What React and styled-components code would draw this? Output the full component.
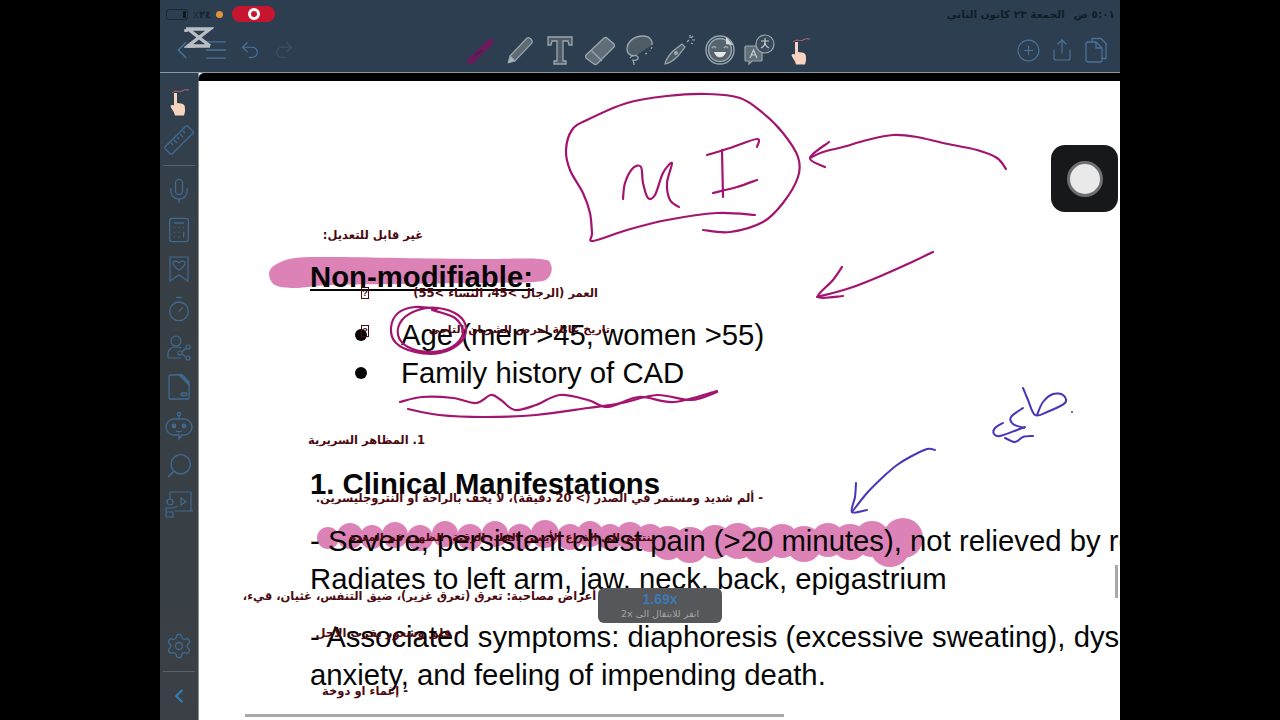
import styled, { createGlobalStyle } from "styled-components"
import { ChevronLeft, Menu, Undo2, Redo2, PlusCircle, Share, Copy, Mic, Calculator, Timer, Search, Settings } from "lucide-react"

const GlobalStyle = createGlobalStyle`
  html, body {
    margin: 0;
    padding: 0;
    background: #000;
    overflow: hidden;
  }
`

const Stage = styled.div`
  width: 1280px;
  height: 720px;
  display: flex;
  justify-content: center;
  background: #000;
`
const Screen = styled.div`
  position: relative;
  width: 960px;
  height: 720px;
  display: flex;
  flex-direction: column;
  overflow: hidden;
  background: #2e3f4f;
`
const TopBar = styled.header`
  height: 72px;
  flex: none;
  display: flex;
  flex-direction: column;
  background: #2c3e50;
  border-bottom: 1px solid #8d979f;
`
const StatusRow = styled.div`
  height: 28px;
  flex: none;
  display: flex;
  align-items: center;
  justify-content: space-between;
  padding: 0 5px 0 6px;
`
const StatusLeft = styled.div`
  display: flex;
  align-items: center;
  gap: 3px;
`
const Battery = styled.div`
  position: relative;
  width: 20px;
  height: 9px;
  border: 1px solid #1b2835;
  border-radius: 3px;
  &::after {
    content: "";
    position: absolute;
    right: 1px;
    top: 1px;
    width: 3px;
    height: 7px;
    border-radius: 1px;
    background: #10181f;
  }
`
const BatteryText = styled.span`
  font-family: "DejaVu Sans", sans-serif;
  font-size: 10px;
  font-weight: 700;
  color: #17222d;
  width: 22px;
  text-align: center;
`
const OrangeDot = styled.span`
  width: 7px;
  height: 7px;
  border-radius: 50%;
  background: #e0923a;
`
const RecordPill = styled.div`
  width: 43px;
  height: 16px;
  margin-left: 6px;
  border-radius: 8px;
  background: #c8152f;
  display: flex;
  align-items: center;
  justify-content: center;
`
const RecordDot = styled.span`
  width: 12px;
  height: 12px;
  box-sizing: border-box;
  border-radius: 50%;
  border: 3px solid #fff;
  display: flex;
  align-items: center;
  justify-content: center;
  &::after {
    content: "";
    width: 3px;
    height: 3px;
    border-radius: 50%;
    background: #c8152f;
  }
`
const Clock = styled.div`
  direction: rtl;
  display: flex;
  gap: 9px;
  font-family: "DejaVu Sans", sans-serif;
  font-size: 10.5px;
  font-weight: 700;
  color: #121d28;
`
const ToolRow = styled.div`
  flex: 1;
  display: flex;
  align-items: center;
  padding: 0 7px 0 5px;
`
const ToolGroup = styled.div`
  display: flex;
  align-items: center;
  margin-left: ${(p) => p.$offset || 0};
`
const ToolButton = styled.div`
  width: ${(p) => p.$size || 34}px;
  height: 40px;
  display: flex;
  align-items: center;
  justify-content: center;
  color: ${(p) => (p.$dim ? "#3a5268" : "#4a7299")};
`
const CapCutMark = styled.svg`
  position: absolute;
  left: 24px;
  top: 26px;
`
const Body = styled.div`
  flex: 1;
  display: flex;
  min-height: 0;
`
const Sidebar = styled.nav`
  width: 39px;
  flex: none;
  display: flex;
  flex-direction: column;
  align-items: center;
  padding: 8px 0 4px;
  box-sizing: border-box;
  background: linear-gradient(#2f4050, #373f45 28%, #3a4045);
  border-right: 1px solid #8b9298;
`
const SideItem = styled.div`
  height: 39.2px;
  flex: none;
  display: flex;
  align-items: center;
  justify-content: center;
  color: ${(p) => p.$color || "#3f6a92"};
`
const SideRule = styled.hr`
  width: 32px;
  height: 1px;
  flex: none;
  margin: ${(p) => p.$margin};
  border: 0;
  background: #5a6268;
`
const Spacer = styled.div`
  flex: 1;
`
const CanvasArea = styled.main`
  flex: 1;
  display: flex;
  flex-direction: column;
  min-width: 0;
  background: #fff;
`
const BlackStrip = styled.div`
  height: 8px;
  flex: none;
  background: #000;
  border-top-left-radius: 6px;
  box-shadow: -1px 0 0 #2e3f4f;
`
const Page = styled.div`
  position: relative;
  flex: 1;
  overflow: hidden;
  background: #fff;
`
const InkLayer = styled.svg`
  position: absolute;
  left: 0;
  top: 0;
  z-index: ${(p) => p.$z};
`
const DocFlow = styled.div`
  position: relative;
  z-index: 1;
  width: 1200px;
  padding: 177px 0 0 111px;
  font-family: "Liberation Sans", Arial, sans-serif;
  font-size: 29.3px;
  line-height: 38px;
  color: #060606;
  white-space: nowrap;
`
const Heading = styled.div`
  font-weight: 700;
  margin-top: ${(p) => p.$top || 0}px;
  text-decoration: ${(p) => (p.$underline ? "underline" : "none")};
`
const Bullets = styled.ul`
  list-style: none;
  margin: 20px 0 0;
  padding: 0;
`
const Bullet = styled.li`
  display: flex;
  align-items: center;
  gap: 34px;
  padding-left: 45px;
  &::before {
    content: "";
    width: 12px;
    height: 12px;
    border-radius: 50%;
    background: #060606;
  }
`
const Line = styled.div`
  margin-top: ${(p) => p.$top || 0}px;
`
const ArabicNote = styled.div`
  position: absolute;
  z-index: 2;
  top: ${(p) => p.$top}px;
  right: ${(p) => p.$right}px;
  direction: rtl;
  white-space: nowrap;
  font-family: "DejaVu Sans", sans-serif;
  font-size: ${(p) => p.$size || 11.5}px;
  font-weight: 700;
  line-height: 16px;
  color: #4c0a10;
`
const Tofu = styled.span`
  position: absolute;
  z-index: 2;
  left: ${(p) => p.$left}px;
  top: ${(p) => p.$top}px;
  width: 8px;
  height: 12px;
  box-sizing: border-box;
  border: 1px solid #4c0a10;
  font-family: "Liberation Sans", sans-serif;
  font-size: 9px;
  font-weight: 700;
  line-height: 10px;
  text-align: center;
  color: #4c0a10;
`
const ScrollThumb = styled.div`
  position: absolute;
  z-index: 4;
  background: #a9a9a9;
`
const BottomThumb = styled(ScrollThumb)`
  left: 46px;
  bottom: 3px;
  width: 539px;
  height: 3px;
`
const SideThumb = styled(ScrollThumb)`
  right: 2px;
  top: 484px;
  width: 3px;
  height: 33px;
`
const AssistiveTouch = styled.div`
  position: absolute;
  z-index: 5;
  left: 891px;
  top: 145px;
  width: 67px;
  height: 67px;
  border-radius: 14px;
  background: #17181a;
  display: flex;
  align-items: center;
  justify-content: center;
`
const TouchRing = styled.span`
  width: 36px;
  height: 36px;
  box-sizing: border-box;
  border-radius: 50%;
  border: 3px solid #6e6f72;
  background: #e9e9e9;
`
const ZoomToast = styled.div`
  position: absolute;
  z-index: 5;
  left: 438px;
  top: 588px;
  width: 124px;
  height: 35px;
  border-radius: 6px;
  background: #55575a;
  display: flex;
  flex-direction: column;
  align-items: center;
  justify-content: center;
  gap: 1px;
`
const ToastValue = styled.span`
  font-family: "Liberation Sans", sans-serif;
  font-size: 14px;
  line-height: 16px;
  font-weight: 700;
  color: #3d79b4;
`
const ToastHint = styled.span`
  direction: rtl;
  font-family: "DejaVu Sans", sans-serif;
  font-size: 9.5px;
  line-height: 12px;
  color: #a3a5a8;
`

// catmull-rom through the sampled pen points, so strokes stay hand drawn
const smooth = (pts, closed = false) => {
  const at = (i) => (closed ? pts[(i + pts.length) % pts.length] : pts[Math.max(0, Math.min(pts.length - 1, i))])
  let d = `M${pts[0][0]} ${pts[0][1]}`
  const end = closed ? pts.length : pts.length - 1
  for (let i = 0; i < end; i++) {
    const [p0, p1, p2, p3] = [at(i - 1), at(i), at(i + 1), at(i + 2)]
    d += ` C${p1[0] + (p2[0] - p0[0]) / 6} ${p1[1] + (p2[1] - p0[1]) / 6} ${p2[0] - (p3[0] - p1[0]) / 6} ${p2[1] - (p3[1] - p1[1]) / 6} ${p2[0]} ${p2[1]}`
  }
  return closed ? d + "Z" : d
}

const magentaStrokes = [
  [[755,215],[717,213],[667,220],[627,230],[593,241],[592,233],[590,213],[583,193],[570,170],[566,150],[572,130],[587,120],[627,103],[667,96],[707,94],[740,98],[763,113],[783,133],[798,157],[798,177],[783,203],[763,222],[730,232],[703,230]],
  [[623,199],[625,183],[633,168],[641,167],[643,183],[648,198],[655,195],[663,173],[672,163],[667,183],[670,200],[679,207]],
  [[707,155],[730,148],[757,139],[757,147]],
  [[722,150],[723,197]],
  [[713,193],[737,187],[757,180]],
  [[1006,169],[997,158],[977,150],[943,143],[917,137],[893,135],[867,140],[843,147],[823,152],[810,158]],
  [[829,142],[810,158],[825,167]],
  [[933,252],[910,263],[883,275],[850,288],[817,297]],
  [[842,267],[833,280],[818,297],[843,296]],
  [[437,309],[415,307],[398,313],[391,328],[396,343],[415,352],[440,353],[460,343],[466,328],[458,315],[438,308],[418,310],[402,320],[398,335],[408,347],[430,352],[452,347],[463,333],[455,318],[432,310]],
  [[400,402],[422,397],[453,398],[476,403],[491,395],[501,400],[515,410],[536,405],[560,395],[588,400],[608,407],[639,397],[674,402],[717,391]],
  [[408,409],[439,415],[484,417],[536,415],[588,408],[622,403],[657,395],[691,400],[717,392]],
]

const blueStrokes = [
  [[935,450],[927,449],[910,457],[897,465],[883,477],[867,493],[852,512]],
  [[856,483],[855,497],[852,512],[867,510]],
  [[1023,388],[1028,400],[1035,415],[1047,412],[1065,403],[1063,395],[1053,394],[1043,402],[1037,415]],
  [[1023,408],[1011,417],[1013,424],[1024,428]],
  [[1003,423],[995,428],[994,434],[1000,436],[1017,430],[1025,427]],
  [[1005,438],[1015,442],[1023,437],[1033,436]],
]

const headingBlob = [[269,274],[275,265],[295,258],[330,257],[400,258],[480,259],[540,259],[551,265],[549,277],[535,282],[480,283],[400,284],[330,285],[295,288],[275,285]]

const chestBumps = [
  [328,538,11],[350,536,13],[372,537,12],[395,535,13],[420,538,13],[445,534,13],[470,537,13],[495,534,13],
  [520,537,13],[545,534,14],[570,537,13],[590,534,13],[610,537,13],[630,536,14],[650,538,14],[668,543,17],
  [690,545,18],[715,542,17],[738,541,18],[760,545,18],[782,541,17],[804,544,18],[828,540,17],[850,542,18],
  [872,539,18],[890,547,20],[903,538,20],
]

const HandIcon = ({ size = 30 }) => (
  <svg width={size} height={size} viewBox="0 0 30 30">
    <path d="M8 7 C12 3 15 7 18 5 S23 4 25 4" fill="none" stroke="#c4646c" strokeWidth="1" />
    <path d="M10 7 h3 v10 l4 .5 c3 .5 4 2 4 5 v3 l-1 4 h-9 l-1-3 -3-5 c-1-2 0-3 3-2 Z" fill="#f6d4c0" />
  </svg>
)

const RulerIcon = () => (
  <svg width="30" height="30" viewBox="0 0 30 30" fill="none" stroke="currentColor" strokeWidth="1.3">
    <rect x="-1" y="10" width="32" height="10" rx="1.5" transform="rotate(-45 15 15)" />
    <path d="M8 17l2 2M11 14l3 3M14 11l2 2M17 8l3 3M20 5l2 2" transform="translate(-1 1)" />
  </svg>
)

const BookmarkIcon = () => (
  <svg width="24" height="28" viewBox="0 0 24 28" fill="none" stroke="currentColor" strokeWidth="1.2">
    <path d="M3 2h18v24l-9-6-9 6Z" />
    <path d="M12 15c-4-3-6-4-6-7 0-2 4-3 6 0 2-3 6-2 6 0 0 3-2 4-6 7Z" />
  </svg>
)

const ShareUserIcon = () => (
  <svg width="26" height="28" viewBox="0 0 26 28" fill="none" stroke="currentColor" strokeWidth="1.2">
    <circle cx="10" cy="7" r="5" />
    <path d="M2 24v-5c0-4 4-6 8-6 2 0 4 .5 5 1M2 24h13" />
    <circle cx="14" cy="19" r="2" />
    <circle cx="22" cy="13" r="2" />
    <circle cx="22" cy="24" r="2" />
    <path d="M16 18l4-4M16 20l4 3" />
  </svg>
)

const FileIcon = () => (
  <svg width="24" height="28" viewBox="0 0 24 28" fill="none" stroke="currentColor" strokeWidth="1.3">
    <path d="M2 3a1 1 0 0 1 1-1h12l7 7v16a1 1 0 0 1-1 1H3a1 1 0 0 1-1-1Z" />
    <path d="M12 2h3l7 7v3Z" fill="currentColor" />
    <rect x="14" y="20" width="6" height="2.5" rx="1" />
  </svg>
)

const BotIcon = () => (
  <svg width="28" height="30" viewBox="0 0 28 30" fill="none" stroke="currentColor" strokeWidth="1.3">
    <circle cx="14" cy="3" r="1.6" />
    <path d="M14 5v3" />
    <path d="M9 8h10a8 8 0 0 1 8 8 8 8 0 0 1-8 8h-2l-3 4v-4H9a8 8 0 0 1-8-8 8 8 0 0 1 8-8Z" />
    <circle cx="9" cy="15" r="1.8" fill="currentColor" />
    <circle cx="19" cy="15" r="1.8" fill="currentColor" />
    <path d="M11 20c2 1 4 1 6 0" />
  </svg>
)

const TeacherIcon = () => (
  <svg width="30" height="28" viewBox="0 0 30 28" fill="none" stroke="currentColor" strokeWidth="1.2">
    <path d="M6 8V2h21v19H14M11 21h18" />
    <path d="M17 8l5 3.5-5 3.5Z" />
    <circle cx="6" cy="12" r="3" />
    <path d="M2 27v-9h7l5-2M2 22h7v5H2" />
  </svg>
)

const MarkerIcon = () => (
  <svg width="32" height="32" viewBox="0 0 32 32">
    <path d="M6 22 L23 4 q2-1 4 1 t1 4 L11 27 Z" fill="#5f6b74" stroke="#98a5ae" strokeWidth="1.2" />
    <path d="M6 22l5 5-7 2Z" fill="#a9b3ba" stroke="#98a5ae" strokeWidth="1" />
  </svg>
)

const ActivePenIcon = () => (
  <svg width="34" height="32" viewBox="0 0 34 32">
    <path d="M3 27 L24 7 q4-4 6-1 t-2 6 L8 31 Z" fill="#6b1a5c" />
    <path d="M12 22l7-6" stroke="#4d1c50" strokeWidth="2" />
  </svg>
)

const TextToolIcon = () => (
  <svg width="26" height="32" viewBox="0 0 26 32" fill="#4f5c66" stroke="#9aa7b0" strokeWidth="1.3">
    <path d="M1 3h24v8h-3l-1-4h-5v20h3v3H7v-3h3V7H5l-1 4H1Z" />
  </svg>
)

const EraserIcon = () => (
  <svg width="32" height="32" viewBox="0 0 32 32" stroke="#9aa7b0" strokeWidth="1.3">
    <path d="M2 21 L20 4 q2-1 3 0 l7 6 q1 2 0 3 L13 30 q-2 1-3 0 L2 24 q-1-2 0-3Z" fill="#626e77" />
    <path d="M7 16l11 11" fill="none" />
  </svg>
)

const LassoIcon = () => (
  <svg width="30" height="32" viewBox="0 0 30 32" fill="none" stroke="#9aa7b0" strokeWidth="1.3">
    <path d="M12 21C6 23 2 20 2 15 2 8 9 2 18 2c6 0 10 4 9 9" fill="#4f5c66" />
    <path d="M27 13l-2 4M22 19l-3 2" strokeDasharray="2 2" />
    <path d="M5 24c2-3 7-3 8-1s-2 4-5 3c0 1 1 3 1 5" />
  </svg>
)

const MagicPenIcon = () => (
  <svg width="32" height="32" viewBox="0 0 32 32" fill="none" stroke="#9aa7b0" strokeWidth="1.2">
    <path d="M1 30c1-5 4-9 8-13l9-7 3 3-7 9c-4 4-8 7-13 8Z" fill="#4f5c66" />
    <circle cx="12" cy="19" r="1.5" fill="#9aa7b0" />
    <path d="M25 6l-2 2M26 1v3M31 6h-3M29 2l-2 2M29 10l-2-1" />
  </svg>
)

const StickerIcon = () => (
  <svg width="30" height="30" viewBox="0 0 30 30" fill="none" stroke="#9aa7b0" strokeWidth="1.4">
    <circle cx="15" cy="15" r="14" />
    <circle cx="15" cy="15" r="11.5" fill="#57646d" />
    <path d="M7 13q2-3 4 0M19 13q2-3 4 0" />
    <path d="M9 17c2 7 10 7 12 0Z" fill="#e4e8ea" stroke="none" />
    <path d="M21 2l7 8-7-1Z" fill="#d4d9dc" stroke="none" />
  </svg>
)

const TranslateIcon = () => (
  <svg width="32" height="32" viewBox="0 0 32 32" stroke="#9aa7b0" strokeWidth="1.2">
    <path d="M2 12h15a1 1 0 0 1 1 1v13a1 1 0 0 1-1 1H8l-3 3v-3H2a1 1 0 0 1-1-1V13a1 1 0 0 1 1-1Z" fill="#626e77" />
    <circle cx="21" cy="10" r="9" fill="#3a4a58" />
    <path d="M17 7h8M21 4v4c0 3-2 5-4 6M21 8c0 3 2 5 4 6" fill="none" stroke="#c3ccd2" />
    <path d="M6 24l3.5-8 3.5 8M7.5 21h4" fill="none" stroke="#c3ccd2" />
  </svg>
)

const DocumentIcon = () => (
  <svg width="22" height="26" viewBox="0 0 22 26" fill="none" stroke="currentColor" strokeWidth="1.3">
    <path d="M7 5V1.5h9l5 5v15h-4" />
    <path d="M1 7a2 2 0 0 1 2-2h8l6 6v12a2 2 0 0 1-2 2H3a2 2 0 0 1-2-2Z" />
    <path d="M11 5v6h6" />
  </svg>
)

const App = () => {
  return (
    <Stage>
      <GlobalStyle />
      <Screen>
        <TopBar>
          <StatusRow>
            <StatusLeft>
              <Battery />
              <BatteryText>٪٢٤</BatteryText>
              <OrangeDot />
              <RecordPill><RecordDot /></RecordPill>
            </StatusLeft>
            <Clock>
              <span>٥:٠١ ص</span>
              <span>الجمعة ٢٣ كانون الثاني</span>
            </Clock>
          </StatusRow>
          <ToolRow>
            <ToolGroup>
              <ToolButton><ChevronLeft size={30} strokeWidth={1.2} /></ToolButton>
              <ToolButton><Menu size={28} strokeWidth={1.2} /></ToolButton>
              <ToolButton><Undo2 size={22} strokeWidth={1.3} /></ToolButton>
              <ToolButton $dim><Redo2 size={22} strokeWidth={1.3} /></ToolButton>
            </ToolGroup>
            <ToolGroup $offset="159px">
              <ToolButton $size={40}><ActivePenIcon /></ToolButton>
              <ToolButton $size={40}><MarkerIcon /></ToolButton>
              <ToolButton $size={40}><TextToolIcon /></ToolButton>
              <ToolButton $size={40}><EraserIcon /></ToolButton>
              <ToolButton $size={40}><LassoIcon /></ToolButton>
              <ToolButton $size={40}><MagicPenIcon /></ToolButton>
              <ToolButton $size={40}><StickerIcon /></ToolButton>
              <ToolButton $size={40}><TranslateIcon /></ToolButton>
              <ToolButton $size={40}><HandIcon /></ToolButton>
            </ToolGroup>
            <ToolGroup $offset="auto">
              <ToolButton><PlusCircle size={25} strokeWidth={1.1} /></ToolButton>
              <ToolButton><Share size={24} strokeWidth={1.2} /></ToolButton>
              <ToolButton><DocumentIcon /></ToolButton>
            </ToolGroup>
          </ToolRow>
        </TopBar>
        <CapCutMark width="30" height="24" viewBox="0 0 30 24" fill="none" stroke="#b9bec3" strokeWidth="3.4">
          <path d="M2 3h24L4 20h22M4 3l22 17M2 3v3M2 20" />
          <path d="M3 20h8" />
        </CapCutMark>
        <Body>
          <Sidebar>
            <SideItem><HandIcon /></SideItem>
            <SideItem><RulerIcon /></SideItem>
            <SideRule $margin="6px 0 5px" />
            <SideItem><Mic size={28} strokeWidth={1.1} /></SideItem>
            <SideItem><Calculator size={28} strokeWidth={1.1} /></SideItem>
            <SideItem><BookmarkIcon /></SideItem>
            <SideItem><Timer size={28} strokeWidth={1.1} /></SideItem>
            <SideItem><ShareUserIcon /></SideItem>
            <SideItem><FileIcon /></SideItem>
            <SideItem><BotIcon /></SideItem>
            <SideItem><Search size={29} strokeWidth={1.2} style={{ transform: "scaleX(-1)" }} /></SideItem>
            <SideItem><TeacherIcon /></SideItem>
            <Spacer />
            <SideItem><Settings size={28} strokeWidth={1.1} /></SideItem>
            <SideRule $margin="5px 0" />
            <SideItem $color="#2f7db8"><ChevronLeft size={22} strokeWidth={2.4} /></SideItem>
          </Sidebar>
          <CanvasArea>
            <BlackStrip />
            <Page>
              <InkLayer $z={0} width="921" height="639" viewBox="199 81 921 639">
                <path d={smooth(headingBlob, true)} fill="#dc82b6" />
                {chestBumps.map(([cx, cy, r]) => (
                  <circle key={cx} cx={cx} cy={cy} r={r} fill="#dc82b6" />
                ))}
              </InkLayer>
              <DocFlow>
                <Heading $underline>Non-modifiable:</Heading>
                <Bullets>
                  <Bullet>Age (men &gt;45, women &gt;55)</Bullet>
                  <Bullet>Family history of CAD</Bullet>
                </Bullets>
                <Heading $top={73}>1. Clinical Manifestations</Heading>
                <Line $top={19}>- Severe, persistent chest pain (&gt;20 minutes), not relieved by rest or nitroglycerin</Line>
                <Line>Radiates to left arm, jaw, neck, back, epigastrium</Line>
                <Line $top={20}>- Associated symptoms: diaphoresis (excessive sweating), dyspnea, nausea, vomiting,</Line>
                <Line>anxiety, and feeling of impending death.</Line>
              </DocFlow>
              <ArabicNote $top={146} $right={697}>غير قابل للتعديل:</ArabicNote>
              <ArabicNote $top={204} $right={522}>العمر (الرجال &gt;45، النساء &gt;55)</ArabicNote>
              <Tofu $left={162} $top={206}>?</Tofu>
              <ArabicNote $top={241} $right={510} $size={11}>تاريخ عائلة لمرض الشريان التاجي</ArabicNote>
              <Tofu $left={162} $top={244}>?</Tofu>
              <ArabicNote $top={351} $right={695}>1. المظاهر السريرية</ArabicNote>
              <ArabicNote $top={409} $right={357}>- ألم شديد ومستمر في الصدر (&gt; 20 دقيقة)، لا يخف بالراحة او النتروجليسرين.</ArabicNote>
              <ArabicNote $top={449} $right={465} $size={11}>ينتشر الى الذراع الأيسر، الفك، الرقبة، الظهر، فم المعدة</ArabicNote>
              <ArabicNote $top={507} $right={515}>- أعراض مصاحبة: تعرق (تعرق غزير)، ضيق التنفس، غثيان، قيء،</ArabicNote>
              <ArabicNote $top={544} $right={660}>- قلق وشعور بقرب الأجل</ArabicNote>
              <ArabicNote $top={602} $right={712}>- إغماء او دوخة</ArabicNote>
              <InkLayer $z={3} width="921" height="639" viewBox="199 81 921 639" fill="none" strokeLinecap="round" strokeLinejoin="round">
                {magentaStrokes.map((pts, i) => (
                  <path key={i} d={smooth(pts)} stroke="#a3146e" strokeWidth="2.2" />
                ))}
                {blueStrokes.map((pts, i) => (
                  <path key={i} d={smooth(pts)} stroke="#4a35b8" strokeWidth="2" />
                ))}
                <circle cx="1072" cy="412" r="1" fill="#4a35b8" />
              </InkLayer>
              <BottomThumb />
              <SideThumb />
            </Page>
          </CanvasArea>
        </Body>
        <AssistiveTouch><TouchRing /></AssistiveTouch>
        <ZoomToast>
          <ToastValue>1.69x</ToastValue>
          <ToastHint>انقر للانتقال الى 2x</ToastHint>
        </ZoomToast>
      </Screen>
    </Stage>
  )
}

export default App
